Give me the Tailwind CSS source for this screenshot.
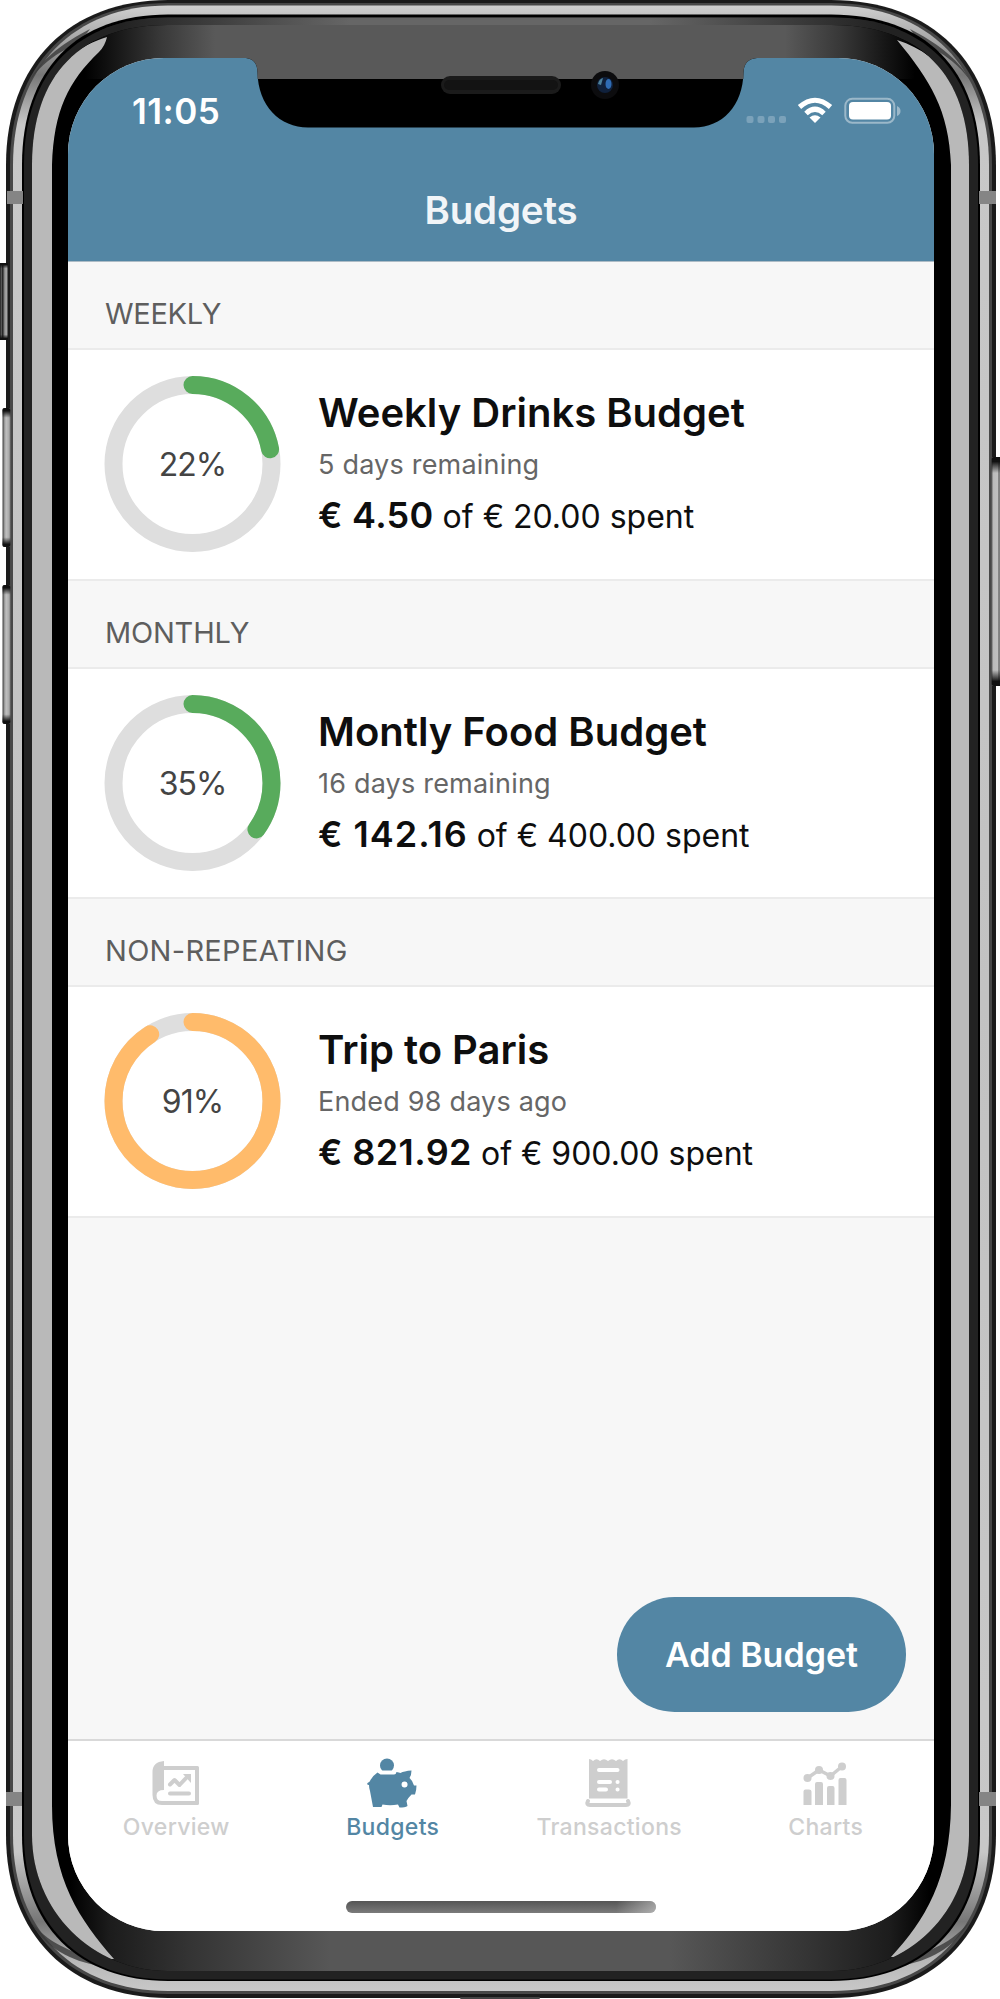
<!DOCTYPE html>
<html lang="en">
<head>
<meta charset="utf-8">
<title>Budgets</title>
<script src="https://cdn.jsdelivr.net/npm/@tailwindcss/browser@4"></script>
</head>
<body class="bg-white">
<main class="relative w-[1000px] h-[1999px] overflow-hidden font-[Inter,sans-serif] pt-[58px] pl-[68px]">

  <!-- Phone body -->
  <svg class="absolute inset-0" width="1000" height="1999" viewBox="0 0 1000 1999">
    <defs>
      <linearGradient id="btnL"><stop offset="0" stop-color="#444"/><stop offset=".12" stop-color="#666"/><stop offset=".25" stop-color="#999"/><stop offset=".45" stop-color="#c0c0c0"/><stop offset=".8" stop-color="#aaa"/><stop offset="1" stop-color="#777"/></linearGradient>
      <linearGradient id="btnR" x1="1" x2="0"><stop offset="0" stop-color="#777"/><stop offset=".35" stop-color="#888"/><stop offset=".4" stop-color="#c0c0c0"/><stop offset=".8" stop-color="#bbb"/><stop offset="1" stop-color="#666"/></linearGradient>
      <linearGradient id="mute"><stop offset="0" stop-color="#222"/><stop offset=".2" stop-color="#555"/><stop offset=".35" stop-color="#222"/><stop offset=".65" stop-color="#999"/><stop offset="1" stop-color="#aaa"/></linearGradient>
      <linearGradient id="cap" x2="0" y2="1"><stop offset="0" stop-color="#111"/><stop offset=".02" stop-color="#111"/><stop offset=".07" stop-color="#111" stop-opacity="0"/><stop offset=".93" stop-color="#111" stop-opacity="0"/><stop offset=".98" stop-color="#111"/></linearGradient>
      <linearGradient id="steel" x2="0" y2="1"><stop offset="0" stop-color="#d0d0d0"/><stop offset=".02" stop-color="#a0a0a0"/><stop offset=".035" stop-color="#777"/><stop offset=".06" stop-color="#c8c8c8"/><stop offset=".5" stop-color="#c2c2c2"/><stop offset=".93" stop-color="#c8c8c8"/><stop offset=".965" stop-color="#777"/><stop offset=".985" stop-color="#b8b8b8"/><stop offset="1" stop-color="#c8c8c8"/></linearGradient>
      <linearGradient id="topGlass" gradientUnits="userSpaceOnUse" x1="0" x2="1000" y1="0" y2="0"><stop offset=".085" stop-color="#000"/><stop offset=".115" stop-color="#161616"/><stop offset=".16" stop-color="#383838"/><stop offset=".215" stop-color="#595959"/><stop offset=".785" stop-color="#595959"/><stop offset=".84" stop-color="#383838"/><stop offset=".885" stop-color="#161616"/><stop offset=".915" stop-color="#000"/></linearGradient>
      <linearGradient id="botGlass" gradientUnits="userSpaceOnUse" x1="0" x2="1000" y1="0" y2="0"><stop offset=".07" stop-color="#000"/><stop offset=".11" stop-color="#1c1c1c"/><stop offset=".19" stop-color="#343434"/><stop offset=".33" stop-color="#575757"/><stop offset=".67" stop-color="#575757"/><stop offset=".81" stop-color="#343434"/><stop offset=".89" stop-color="#1c1c1c"/><stop offset=".93" stop-color="#000"/></linearGradient>
      <linearGradient id="topRim" gradientUnits="userSpaceOnUse" x1="0" x2="1000" y1="0" y2="0"><stop offset=".12" stop-color="#222"/><stop offset=".35" stop-color="#666"/><stop offset=".65" stop-color="#666"/><stop offset=".88" stop-color="#222"/></linearGradient>
      <path id="glassShape" d="M168 25H831C920 25 969 74 969 165V1835C969 1911 910 1971 831 1971H168C92 1971 32 1911 32 1835V165C32 74 81 25 168 25Z"/>
      <path id="rimShape" d="M168 17.500H831C923 17.500 978 71 978 165V1835C978 1924 921 1979.500 831 1979.500H168C81 1979.500 24 1924 24 1835V165C24 71 79 17.500 168 17.500Z"/>
      <clipPath id="glass"><use href="#glassShape"/></clipPath>
      <clipPath id="rim"><use href="#rimShape"/></clipPath>
    </defs>

    <path fill="#1b1b1b" d="M168 0H831C932 0 996 63 996 165V1835C996 1935 932 1998 831 1998H168C70 1998 6 1935 6 1835V165C6 63 70 0 168 0Z"/>
    <path fill="#484848" d="M168 3H831C930 3 992 65 992 165V1835C992 1933 930 1994 831 1994H168C72 1994 10 1933 10 1835V165C10 65 72 3 168 3Z"/>
    <path fill="url(#steel)" d="M168 5.500H831C928 5.500 989 67 989 165V1835C989 1931 928 1991 831 1991H168C74 1991 13 1931 13 1835V165C13 67 74 5.500 168 5.500Z"/>
    <path fill="#3a3a3a" opacity=".8" d="M30 80C43 57 65 42 90 29C76 50 54 48 30 80ZM970 80C957 57 935 42 910 29C924 50 946 48 970 80ZM30 1921C43 1944 65 1959 95 1965C76 1948 54 1950 30 1921ZM970 1921C957 1944 935 1959 905 1965C924 1948 946 1950 970 1921Z"/>
    <path fill="#000" d="M168 14.500H831C925 14.500 980 69 980 165V1835C980 1926 923 1981 831 1981H168C79 1981 22 1926 22 1835V165C22 69 77 14.500 168 14.500Z"/>
    <use href="#rimShape" fill="#222"/>
    <rect x="100" y="17" width="800" height="14" fill="url(#topRim)" clip-path="url(#rim)"/>
    <use href="#glassShape" fill="#000"/>
    <g clip-path="url(#glass)">
      <rect x="50" y="25" width="900" height="54" fill="url(#topGlass)"/>
      <rect x="50" y="79" width="50" height="20" fill="#000"/>
      <rect x="50" y="1880" width="900" height="91" fill="url(#botGlass)"/>
      <!-- Side reflections -->
      <path fill="#b9b9b9" d="M107 37C78 46 60 62 48 82L20 90V1900L60 1959H114C80 1920 52 1880 52 1805V165C54 110 68 82 99 52Q105 46 107 37Z"/>
      <path fill="#b9b9b9" d="M897 40C922 48 940 62 952 82L980 90V1900L940 1960L891 1957C925 1920 950 1880 951 1805V165C949 110 930 80 897 40Z"/>
    </g>

    <!-- Side keys -->
    <rect x="-4" y="263" width="12" height="77" rx="4" fill="#111"/><rect x="0" y="264" width="7.500" height="75" fill="url(#mute)"/><rect x="0" y="263" width="8" height="77" fill="url(#cap)"/>
    <rect x="2.500" y="408" width="8" height="139" rx="2" fill="url(#btnL)"/><rect x="2.500" y="408" width="8" height="139" rx="2" fill="url(#cap)"/>
    <rect x="2.500" y="585" width="8" height="139" rx="2" fill="url(#btnL)"/><rect x="2.500" y="585" width="8" height="139" rx="2" fill="url(#cap)"/>
    <rect x="991.500" y="457" width="10" height="229" rx="2" fill="url(#btnR)"/><rect x="991.500" y="457" width="10" height="229" rx="2" fill="url(#cap)"/>

    <!-- Antenna bands -->
    <path fill="#858585" d="M7 191h16v13H7ZM979 191h17v13h-17ZM6 1792h16v14H6ZM979 1792h17v14h-17Z"/>
    <rect x="460" y="1997" width="80" height="2" rx="1" fill="#444"/>
  </svg>

  <!-- Screen -->
  <section class="relative flex flex-col w-[866px] h-[1873px] rounded-[96px] overflow-hidden bg-[#f7f7f7]">
    <header class="flex flex-col h-[204px] shrink-0 bg-[#5386a4] border-b border-[#adbcc6] text-white">
      <div class="flex justify-between h-[105px] pt-[34px] pl-[64px] pr-[32px]">
        <time class="text-[35px] leading-[38px] font-semibold tracking-[0.5px]">11:05</time>
        <svg class="mt-[3px]" width="156" height="32" viewBox="746 95 156 32">
          <g fill="#7ba2ba"><rect x="746.500" y="116" width="7" height="7" rx="2"/><rect x="757.500" y="116" width="7" height="7" rx="2"/><rect x="768" y="116" width="7" height="7" rx="2"/><rect x="779" y="116" width="7" height="7" rx="2"/></g>
          <g fill="none" stroke="#fff" stroke-width="5"><path d="M799.500 107Q815 93.500 830.500 107"/><path d="M806 113.500Q815 105 824 113.500"/></g>
          <path fill="#fff" d="M809.500 117.500Q815 113 820.500 117.500L815 123Z"/>
          <rect x="845.300" y="98.800" width="49" height="24" rx="7" fill="none" stroke="#9bb8c9" stroke-width="2"/>
          <rect x="849" y="102" width="42" height="17.500" rx="4" fill="#fff"/>
          <path fill="#9bb8c9" d="M897 106q3.500 1.500 3.500 5t-3.500 5Z"/>
        </svg>
      </div>
      <h1 class="text-center text-[38.500px] leading-[94px] h-[98px] font-semibold tracking-[-0.2px] text-[#f1f5f8]">Budgets</h1>
    </header>

    <div id="list" class="flex flex-col grow"></div>

    <footer class="relative h-[192px] shrink-0 bg-white border-t-2 border-[#d9d9d9]">
      <nav class="grid grid-cols-4 pt-[15px] text-center text-[23px] leading-[30px] font-medium tracking-[0.3px] text-[#cecece]">
        <a class="flex flex-col items-center">
          <svg class="-ml-0.5" width="54" height="56" viewBox="0 0 54 56" fill="#cecece"><path fill-rule="evenodd" d="M16 5V10H49.500Q51 10 51 11.500V47.500Q51 49 49.500 49H14Q4.500 49 4.500 39V16Q4.500 6 16 5ZM16 14V34Q8.500 34 8.500 39.500Q8.500 45 14 45H47V14Z"/><path fill="none" stroke="#cecece" stroke-width="4" stroke-linecap="round" stroke-linejoin="round" d="M22 28.500l4.500-4.500 5 5L40 20M22 37.500H41"/><path d="M35 18h8v9Z"/></svg>
          <span>Overview</span>
        </a>
        <a class="flex flex-col items-center text-[#5386a4]">
          <svg class="-ml-0.5" width="54" height="56" viewBox="0 0 54 56" fill="#5386a4"><circle cx="22" cy="9.500" r="7"/><path d="M14 14.500H30V19H14Z" fill="#fff"/><path fill-rule="evenodd" d="M12.500 16.500L15.500 18.500H29Q31 18.500 31.500 16Q34 16.500 35.500 17Q39 15 46.500 14.500Q46.500 19 44.500 22Q48 25 49 29.500H51.500Q51.500 34 50 38.500H46.500Q43 42 41.500 45L42.500 50Q40 51.500 34.500 51.500L33 48.500Q25 50 17.500 48.500L16.500 51H8L5 35Q4 32 4 29Q1.500 29 2.500 27Q5 26 5.500 24Q8 19.500 12.500 16.500ZM39.500 25.500a3 3 0 1 0 .1 6a3 3 0 1 0-.1-6Z"/></svg>
          <span>Budgets</span>
        </a>
        <a class="flex flex-col items-center">
          <svg class="-ml-0.5" width="54" height="56" viewBox="0 0 54 56"><path fill="#cecece" d="M8 3Q10 3 12 5Q15.500 1.500 19 5Q23 1.500 27 5Q31 1.500 35 5Q38.500 1.500 42 5Q44 3 46.500 3V42.500H8Z"/><path fill="none" stroke="#cecece" stroke-width="4" stroke-linecap="round" d="M7 45Q5 49 9 49H45Q49 49 47 45"/><path fill="none" stroke="#fff" stroke-width="4" stroke-linecap="round" d="M18 14H36.500M18 26H29M18 33.500H25M36.500 26h.1M36.500 33.500h.1"/></svg>
          <span>Transactions</span>
        </a>
        <a class="flex flex-col items-center">
          <svg class="-ml-0.5" width="54" height="56" viewBox="0 0 54 56" fill="#cecece"><path d="M5.500 49V35.500q0-2 2-2H11q2.500 0 2.500 2V49ZM17 49V28q0-2 2-2h4q2 0 2 2V49ZM29 49V32q0-2 2-2h3.500q2 0 2 2V49ZM40.500 49V24q0-2 2-2h4q2 0 2 2V49Z"/><path fill="none" stroke="#cecece" stroke-width="3.500" d="M9.500 22L21 14L32.500 20L44 10.500"/><circle cx="9.500" cy="22" r="4"/><circle cx="21" cy="14" r="4"/><circle cx="32.500" cy="20" r="4"/><circle cx="44" cy="10.500" r="4"/></svg>
          <span>Charts</span>
        </a>
      </nav>
      <div class="absolute left-[278px] top-[160px] w-[310px] h-[12px] rounded-full bg-gradient-to-b from-[#555] to-[#7b7b7b]"></div>
      <div class="absolute left-[548px] top-[160px] w-[40px] h-[12px] rounded-r-full bg-gradient-to-r from-white/0 to-white/40"></div>
    </footer>

    <button class="absolute left-[549px] top-[1539px] w-[289px] h-[115px] rounded-full bg-[#5386a4] text-white text-[34px] font-semibold">Add Budget</button>
  </section>

  <!-- Notch -->
  <svg class="absolute left-[240px] top-[56px]" width="522" height="74" viewBox="240 56 522 74">
    <path fill="#000" d="M246 56V58Q257 59 257.500 72C258 106 280 127.500 308 127.500H694C722 127.500 743 106 743.500 72Q744 59 757 58V56Z"/>
    <path fill="#595959" d="M246 56V58Q257 59 257.500 72V79H743.500V72Q744 59 757 58V56Z"/>
    <rect x="441" y="76" width="120" height="18" rx="9" fill="#1b1b1b"/>
    <rect x="444" y="80" width="114" height="10" rx="5" fill="#131313"/>
    <circle cx="605" cy="85" r="14" fill="#0c0c0e"/><circle cx="605" cy="85" r="8" fill="#10213c"/><ellipse cx="608.500" cy="84" rx="3" ry="5" fill="#2f6cb5"/><path fill="#4d819c" d="M598 84q1-5 5-6l-2 7Z"/>
  </svg>
</main>

<script>
  const budgets = [
    ['WEEKLY', 'tracking-[-0.3px]', 22, '#58ab5c', 'Weekly Drinks Budget', '5 days remaining', '€ 4.50', 'tracking-[0.3px]', '€ 20.00'],
    ['MONTHLY', 'tracking-[-0.2px]', 35, '#58ab5c', 'Montly Food Budget', '16 days remaining', '€ 142.16', 'tracking-[1px]', '€ 400.00'],
    ['NON-REPEATING', 'tracking-[0.3px]', 91, '#ffbb6b', 'Trip to Paris', 'Ended 98 days ago', '€ 821.92', 'tracking-[0.4px]', '€ 900.00'],
  ];
  document.getElementById('list').innerHTML = budgets.map(([group, spacing, pct, color, name, when, spent, spentSpacing, total]) => `
    <section>
      <h2 class="h-[86px] pt-[33px] pl-[37px] text-[29px] leading-[38px] ${spacing} text-[#5e5e5e]">${group}</h2>
      <article class="flex h-[232.700px] bg-white border-y-2 border-[#ebebeb] pl-[36px]">
        <svg class="mt-[25px] shrink-0" width="178" height="178" viewBox="0 0 178 178">
          <circle cx="88.500" cy="89" r="79" fill="none" stroke="#dedede" stroke-width="18"/>
          <circle cx="88.500" cy="89" r="79" fill="none" stroke="${color}" stroke-width="18" stroke-linecap="round" pathLength="100" stroke-dasharray="${pct} 100" transform="rotate(-90 88.500 89)"/>
          <text x="88.500" y="101" text-anchor="middle" font-size="32" letter-spacing="-1" fill="#444">${pct}%</text>
        </svg>
        <div class="pl-[36px] pt-[37px] whitespace-nowrap text-[#0e0e0e]">
          <h3 class="text-[40px] leading-[52px] font-semibold">${name}</h3>
          <p class="pt-[8px] text-[27px] leading-[36px] tracking-[0.2px] text-[#666]">${when}</p>
          <p class="pt-[9px] text-[32px] leading-[46px]"><b class="text-[36px] font-semibold ${spentSpacing}">${spent}</b> of ${total} spent</p>
        </div>
      </article>
    </section>`).join('');
</script>
</body>
</html>
